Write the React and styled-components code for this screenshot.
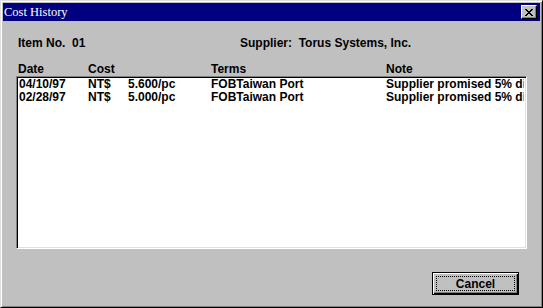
import React from "react";
import styled, { createGlobalStyle } from "styled-components";

const Global = createGlobalStyle`
  html, body { margin: 0; padding: 0; background: #c0c0c0; }
  * { box-sizing: border-box; }
`;

const Window = styled.div`
  width: 543px;
  height: 308px;
  background: #c0c0c0;
  border-top: 1px solid #dfdfdf;
  border-left: 1px solid #dfdfdf;
  border-right: 1px solid #000;
  border-bottom: 1px solid #000;
  box-shadow: inset 1px 1px #fff, inset -1px -1px #808080;
  padding: 2px;
  display: flex;
  flex-direction: column;
  font-family: "Liberation Sans", Arial, sans-serif;
  font-weight: bold;
  font-size: 12px;
  color: #000;
`;

const TitleBar = styled.div`
  height: 18px;
  background: #000080;
  display: flex;
  align-items: center;
  justify-content: space-between;
  padding: 0 3px 0 1px;
`;

const Title = styled.span`
  font-family: "Liberation Serif", "Times New Roman", serif;
  font-weight: normal;
  font-size: 12.5px;
  color: #fff;
`;

const CloseBtn = styled.div`
  width: 16px;
  height: 14px;
  background: #c0c0c0;
  border-top: 1px solid #fff;
  border-left: 1px solid #fff;
  border-right: 1px solid #000;
  border-bottom: 1px solid #000;
  box-shadow: inset -1px -1px #808080;
  display: flex;
  align-items: center;
  justify-content: center;
`;

const Content = styled.div`
  flex: 1;
  display: flex;
  flex-direction: column;
  padding: 15px 13px 0 13px;
`;

const InfoRow = styled.div`
  display: flex;
  height: 14px;
  align-items: center;
  padding-left: 2px;
`;

const InfoItem = styled.span`
  width: ${(p) => p.w || "auto"};
  white-space: pre;
`;

const HeaderRow = styled.div`
  display: grid;
  grid-template-columns: 70px 123px 175px 1fr;
  margin-top: 12px;
  padding-left: 2px;
  height: 14px;
  align-items: center;
`;

const List = styled.div`
  height: 173px;
  background: #fff;
  border-top: 1px solid #808080;
  border-left: 1px solid #808080;
  border-right: 1px solid #fff;
  border-bottom: 1px solid #fff;
  box-shadow: inset 1px 1px #000, inset -1px -1px #dfdfdf;
  padding: 1px 2px 0 2px;
  overflow: hidden;
`;

const Row = styled.div`
  display: grid;
  grid-template-columns: 69px 40px 83px 175px 1fr;
  height: 13px;
  line-height: 13px;
  white-space: nowrap;
  overflow: hidden;
`;

const Cell = styled.span`
  overflow: hidden;
`;

const Footer = styled.div`
  display: flex;
  justify-content: flex-end;
  padding: 23px 8px 0 0;
`;

const Button = styled.div`
  width: 87px;
  height: 23px;
  border: 1px solid #000;
  background: #c0c0c0;
  box-shadow: inset 1px 1px #fff, inset -1px -1px #000, inset -2px -2px #808080;
  display: flex;
  align-items: center;
  justify-content: center;
  padding: 3px;
`;

const Focus = styled.div`
  width: 100%;
  height: 100%;
  border: 1px dotted #000;
  display: flex;
  align-items: center;
  justify-content: center;
  font-size: 12px;
`;

const rows = [
  ["04/10/97", "NT$", "5.600/pc", "FOBTaiwan Port", "Supplier promised 5% discount"],
  ["02/28/97", "NT$", "5.000/pc", "FOBTaiwan Port", "Supplier promised 5% discount"],
];

export default function App() {
  return (
    <>
      <Global />
      <Window>
        <TitleBar>
          <Title>Cost History</Title>
          <CloseBtn>
            <svg width="8" height="7" viewBox="0 0 8 7">
              <path d="M0 0h2v1h1v1h2V1h1V0h2v1H7v1H6v1H5v1h1v1h1v1h1v1H6V6H5V5H3v1H2v1H0V6h1V5h1V4h1V3H2V2H1V1H0z" fill="#000" />
            </svg>
          </CloseBtn>
        </TitleBar>
        <Content>
          <InfoRow>
            <InfoItem w="222px">{"Item No.  01"}</InfoItem>
            <InfoItem>{"Supplier:  Torus Systems, Inc."}</InfoItem>
          </InfoRow>
          <HeaderRow>
            <span>Date</span>
            <span>Cost</span>
            <span>Terms</span>
            <span>Note</span>
          </HeaderRow>
          <List>
            {rows.map((r, i) => (
              <Row key={i}>
                {r.map((c, j) => (
                  <Cell key={j}>{c}</Cell>
                ))}
              </Row>
            ))}
          </List>
          <Footer>
            <Button>
              <Focus>Cancel</Focus>
            </Button>
          </Footer>
        </Content>
      </Window>
    </>
  );
}
